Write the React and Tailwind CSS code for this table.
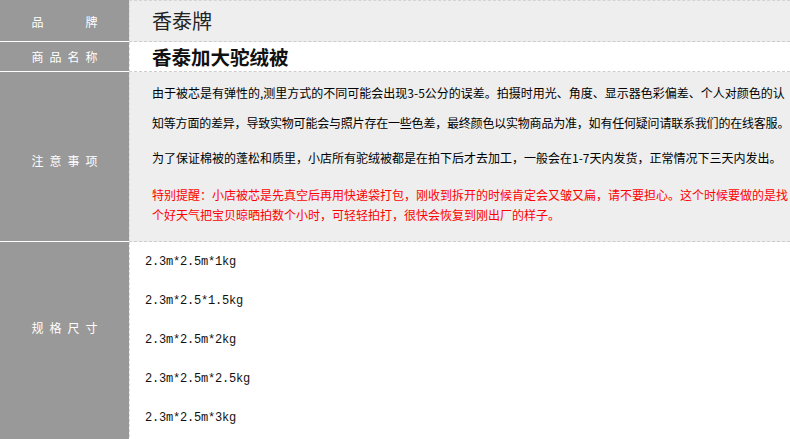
import React from 'react';

const cjk = { fontFamily: '"Noto Sans CJK SC", "Noto Sans", sans-serif' };

const specs = [
  '2.3m*2.5m*1kg',
  '2.3m*2.5*1.5kg',
  '2.3m*2.5m*2kg',
  '2.3m*2.5m*2.5kg',
  '2.3m*2.5m*3kg',
];

const Label = ({ children, className = '' }) => (
  <div
    className={`w-[129px] shrink-0 bg-[#999999] border-b border-white flex justify-center text-white text-[12px] tracking-[6px] pl-[6px] ${className}`}
  >
    {children}
  </div>
);

const App = () => {
  return (
    <div className="w-[790px] h-[439px] overflow-hidden bg-white text-black" style={cjk}>
      {/* 品牌 */}
      <div className="flex h-[42px]">
        <Label className="items-center pt-[2px]">品　　牌</Label>
        <div className="flex-1 bg-[#eeeeee] border-t border-b border-l border-dashed border-t-[#d4d4d4] border-b-[#cccccc] border-l-[#dddddd] flex items-center pl-[22px]">
          <span className="text-[20px] leading-none text-[#222]">香泰牌</span>
        </div>
      </div>

      {/* 商品名称 */}
      <div className="flex h-[30px]">
        <Label className="items-center">商品名称</Label>
        <div className="flex-1 bg-white border-b border-l border-dashed border-b-[#cccccc] border-l-[#dddddd] flex items-center pl-[22px]">
          <span className="text-[19.5px] leading-none font-bold text-[#111]">香泰加大驼绒被</span>
        </div>
      </div>

      {/* 注意事项 */}
      <div className="flex h-[170px]">
        <Label className="items-center pt-[8px]">注意事项</Label>
        <div className="flex-1 bg-[#eeeeee] border-b border-l border-dashed border-b-[#cccccc] border-l-[#dddddd] pl-[22px] pt-[6px] text-[12px] whitespace-nowrap">
          <div className="leading-[30px]">
            <div>由于被芯是有弹性的,测里方式的不同可能会出现3-5公分的误差。拍摄时用光、角度、显示器色彩偏差、个人对颜色的认</div>
            <div className="tracking-[-0.2px]">知等方面的差异，导致实物可能会与照片存在一些色差，最终颜色以实物商品为准，如有任何疑问请联系我们的在线客服。</div>
          </div>
          <div className="leading-[30px] mt-[5px]">为了保证棉被的蓬松和质里，小店所有驼绒被都是在拍下后才去加工，一般会在1-7天内发货，正常情况下三天内发出。</div>
          <div className="leading-[20px] mt-[12px] text-[#ff0000]">
            <div>特别提醒：小店被芯是先真空后再用快递袋打包，刚收到拆开的时候肯定会又皱又扁，请不要担心。这个时候要做的是找</div>
            <div>个好天气把宝贝晾晒拍数个小时，可轻轻拍打，很快会恢复到刚出厂的样子。</div>
          </div>
        </div>
      </div>

      {/* 规格尺寸 */}
      <div className="flex h-[200px]">
        <Label className="items-start pt-[77px]">规格尺寸</Label>
        <div className="flex-1 bg-white border-l border-dashed border-l-[#dddddd] pl-[15px]">
          {specs.map((s) => (
            <div
              key={s}
              className="h-[39px] flex items-center text-[12px] tracking-[-0.2px] text-[#111]"
              style={{ fontFamily: '"Liberation Mono", monospace' }}
            >
              {s}
            </div>
          ))}
        </div>
      </div>
    </div>
  );
};

export default App;
